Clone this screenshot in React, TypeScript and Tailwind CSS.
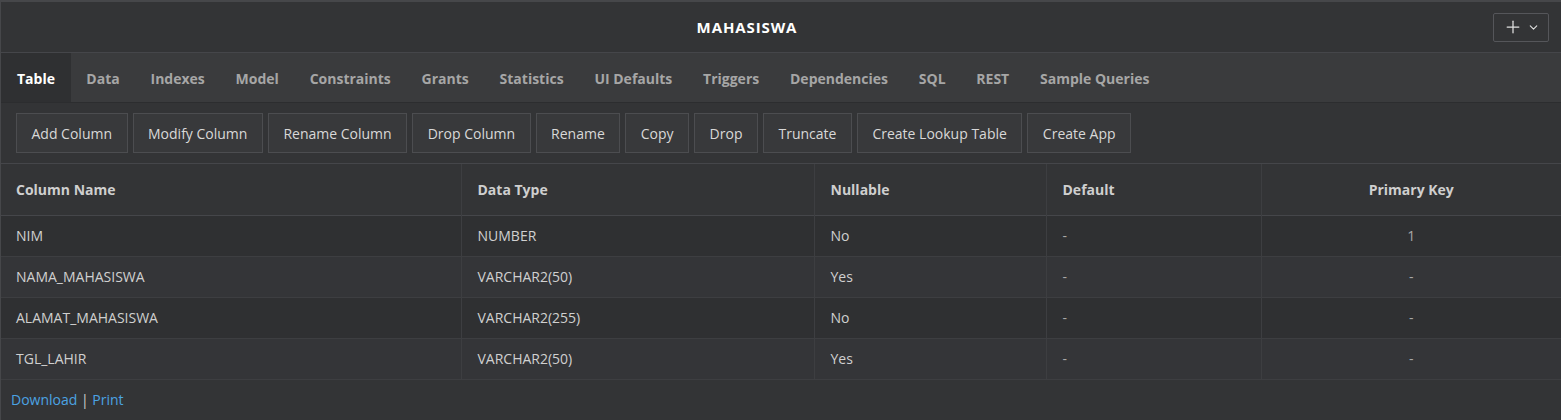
import { Plus, ChevronDown } from 'lucide-react'

const tabs = ['Table', 'Data', 'Indexes', 'Model', 'Constraints', 'Grants', 'Statistics', 'UI Defaults', 'Triggers', 'Dependencies', 'SQL', 'REST', 'Sample Queries']

const actions = ['Add Column', 'Modify Column', 'Rename Column', 'Drop Column', 'Rename', 'Copy', 'Drop', 'Truncate', 'Create Lookup Table', 'Create App']

const rows = [
  { name: 'NIM', type: 'NUMBER', nullable: 'No', def: '-', pk: '1' },
  { name: 'NAMA_MAHASISWA', type: 'VARCHAR2(50)', nullable: 'Yes', def: '-', pk: '-' },
  { name: 'ALAMAT_MAHASISWA', type: 'VARCHAR2(255)', nullable: 'No', def: '-', pk: '-' },
  { name: 'TGL_LAHIR', type: 'VARCHAR2(50)', nullable: 'Yes', def: '-', pk: '-' },
]

export default function App() {
  return (
    <div
      className="w-[1561px] h-[420px] bg-[#333436] text-[#d4d4d4] border-t-2 border-l border-[#46474a] overflow-hidden"
      style={{ fontFamily: '"Open Sans", "Noto Sans", sans-serif' }}
    >
      {/* Title bar */}
      <div className="h-[51px] flex items-center border-b border-[#45464a]">
        <div className="flex-1 text-center text-[15px] tracking-[0.9px] font-bold text-white">MAHASISWA</div>
        <button className="mr-[12px] h-[29px] w-[56px] flex items-center justify-center gap-[4px] border border-[#55565a] rounded-[2px] text-[#e0e0e0]">
          <Plus className="h-[20px] w-[20px]" strokeWidth={1.5} />
          <ChevronDown className="h-[13px] w-[13px]" strokeWidth={2} />
        </button>
      </div>

      {/* Tabs */}
      <div className="h-[50px] flex bg-[#3a3b3d] border-b border-[#2c2d2f]">
        {tabs.map((t, i) => (
          <div
            key={t}
            className={
              i === 0
                ? 'px-[16px] pt-[2px] flex items-center bg-[#2f3032] text-white text-[14px] font-bold'
                : 'px-[15.4px] pt-[2px] flex items-center text-[#a6a6a6] text-[14px] font-bold'
            }
          >
            {t}
          </div>
        ))}
      </div>

      {/* Toolbar */}
      <div className="h-[61px] flex items-center gap-[5px] px-[15px] border-b border-[#45464a]">
        {actions.map((a) => (
          <button
            key={a}
            className="h-[40px] px-[14.5px] bg-[#38393b] border border-[#4c4d50] text-[14px] text-[#d8d8d8]"
          >
            {a}
          </button>
        ))}
      </div>

      {/* Table */}
      <table className="w-full border-collapse text-[14px]">
        <thead>
          <tr className="h-[51px] border-b border-[#45464a] bg-[#333436]">
            <th className="w-[460px] text-left font-bold pl-[15px] text-[#cfcfcf]">Column Name</th>
            <th className="w-[353px] text-left font-bold pl-[16px] border-l border-[#3d3e41] text-[#cfcfcf]">Data Type</th>
            <th className="w-[232px] text-left font-bold pl-[16px] border-l border-[#3d3e41] text-[#cfcfcf]">Nullable</th>
            <th className="w-[215px] text-left font-bold pl-[16px] border-l border-[#3d3e41] text-[#cfcfcf]">Default</th>
            <th className="text-center font-bold border-l border-[#3d3e41] text-[#cfcfcf]">Primary Key</th>
          </tr>
        </thead>
        <tbody>
          {rows.map((r, i) => (
            <tr key={r.name} className={`h-[41px] border-b border-[#3d3e41] ${i % 2 === 0 ? 'bg-[#2f3032]' : 'bg-[#343538]'}`}>
              <td className="pl-[15px] text-[#d0d0d0]">{r.name}</td>
              <td className="pl-[16px] border-l border-[#3d3e41] text-[#d0d0d0]">{r.type}</td>
              <td className="pl-[16px] border-l border-[#3d3e41] text-[#d0d0d0]">{r.nullable}</td>
              <td className="pl-[16px] border-l border-[#3d3e41] text-[#a8a8a8]">{r.def}</td>
              <td className="text-center border-l border-[#3d3e41] text-[#a8a8a8]">{r.pk}</td>
            </tr>
          ))}
        </tbody>
      </table>

      {/* Footer */}
      <div className="pl-[10px] pt-[9px] text-[14px]">
        <a className="text-[#4ba3e3]">Download</a>
        <span className="text-[#d0d0d0]"> | </span>
        <a className="text-[#4ba3e3]">Print</a>
      </div>
    </div>
  )
}
